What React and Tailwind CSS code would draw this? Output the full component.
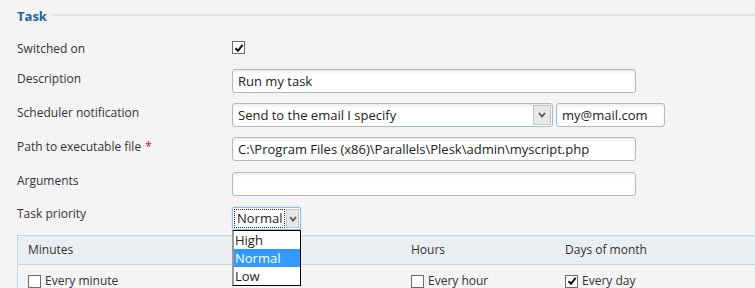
import React from 'react';

const font = { fontFamily: '"Open Sans", "DejaVu Sans", sans-serif' };

const Check = ({ checked }) => (
  <span className="flex h-[13px] w-[13px] shrink-0 items-center justify-center border border-[#6b6b6b] bg-white">
    {checked && (
      <svg width="10" height="10" viewBox="0 0 10 10">
        <path d="M1.5 5.2 L4 7.8 L8.6 1.8" fill="none" stroke="#111" strokeWidth="2" />
      </svg>
    )}
  </span>
);

const Chevron = () => (
  <svg width="8" height="6" viewBox="0 0 8 6">
    <path d="M1 1 L4 4.5 L7 1" fill="none" stroke="#555" strokeWidth="1.8" />
  </svg>
);

const TextInput = ({ value, width = 'w-[404px]' }) => (
  <div
    className={`${width} h-[24px] rounded-[3px] border border-[#aebbc6] bg-white px-[5px] text-[13px] leading-[22px] text-[#222] shadow-[inset_0_2px_3px_rgba(0,0,0,0.08)]`}
  >
    {value}
  </div>
);

const Row = ({ label, required, h = 'h-[34px]', pt = 'pt-[2px]', children }) => (
  <div className={`flex ${h}`}>
    <div className={`w-[215px] shrink-0 ${pt} text-[12px] leading-[16px] text-[#333]`}>
      {label}
      {required && <span className="ml-[4px] text-[#d0021b]">*</span>}
    </div>
    <div className="flex items-start gap-[3px]">{children}</div>
  </div>
);

export default function App() {
  return (
    <div className="h-[288px] w-[755px] overflow-hidden bg-[#f4f4f4]" style={font}>
      <div className="flex h-[35px] items-start pl-[17px] pt-[7px]">
        <span className="text-[13px] font-bold leading-[18px] text-[#1b62a0]">Task</span>
        <div className="ml-[5px] mt-[7px] h-[2px] flex-1 bg-[#e2e2e2]" />
      </div>

      <div className="pl-[17px]">
        <Row label="Switched on" pt="pt-[6px]">
          <div className="flex pt-[6px]">
            <Check checked />
          </div>
        </Row>

        <Row label="Description">
          <TextInput value="Run my task" />
        </Row>

        <Row label="Scheduler notification">
          <div className="flex h-[24px] w-[321px] items-stretch rounded-[3px] border border-[#aebbc6] bg-white shadow-[inset_0_2px_3px_rgba(0,0,0,0.08)]">
            <div className="flex-1 px-[5px] text-[13px] leading-[22px] text-[#222]">Send to the email I specify</div>
            <div className="m-[1px] flex w-[18px] items-center justify-center border border-[#c4c4c4] bg-[#e8e8e8]">
              <Chevron />
            </div>
          </div>
          <TextInput value="my@mail.com" width="w-[109px]" />
        </Row>

        <Row label="Path to executable file" required h="h-[35px]">
          <TextInput value="C:\Program Files (x86)\Parallels\Plesk\admin\myscript.php" />
        </Row>

        <Row label="Arguments" h="h-[35px]" pt="pt-[1px]">
          <TextInput value="" />
        </Row>

        <Row label="Task priority" h="h-[28px]" pt="-mt-[1px]">
          <div className="relative z-10">
            <div className="flex h-[23px] w-[69px] items-stretch rounded-[2px] border border-[#8fbde6] bg-white p-[1px] shadow-[0_0_2px_#a9d1f2]">
              <div className="flex-1 border border-dotted border-[#222] px-[2px] text-[13px] leading-[17px] text-[#222]">Normal</div>
              <div className="ml-[1px] flex w-[13px] items-center justify-center border border-[#c4c4c4] bg-[#e8e8e8]">
                <Chevron />
              </div>
            </div>
            <div className="absolute left-0 top-[23px] w-[69px] border border-black border-l-[2px] border-l-[#9a9a9a] bg-white text-[13px] leading-[18px] text-[#222]">
              <div className="px-[1px]">High</div>
              <div className="bg-[#3399ff] px-[1px] text-white">Normal</div>
              <div className="px-[1px]">Low</div>
            </div>
          </div>
        </Row>

        <div className="border-l border-t border-[#c9d4dc]">
          <div className="flex h-[29px] items-center border-b border-[#c9d4dc] bg-[#eaeef1] text-[12px] text-[#333]">
            <div className="w-[383px] pl-[10px]">Minutes</div>
            <div className="w-[154px] pl-[10px]">Hours</div>
            <div className="flex-1 pl-[10px]">Days of month</div>
          </div>
          <div className="flex h-[30px] items-center pt-[2px] text-[12px] text-[#333]">
            <div className="flex w-[383px] items-center gap-[4px] pl-[10px]">
              <Check />
              <span>Every minute</span>
            </div>
            <div className="flex w-[154px] items-center gap-[4px] pl-[10px]">
              <Check />
              <span>Every hour</span>
            </div>
            <div className="flex flex-1 items-center gap-[4px] pl-[10px]">
              <Check checked />
              <span>Every day</span>
            </div>
          </div>
        </div>
      </div>
    </div>
  );
}
